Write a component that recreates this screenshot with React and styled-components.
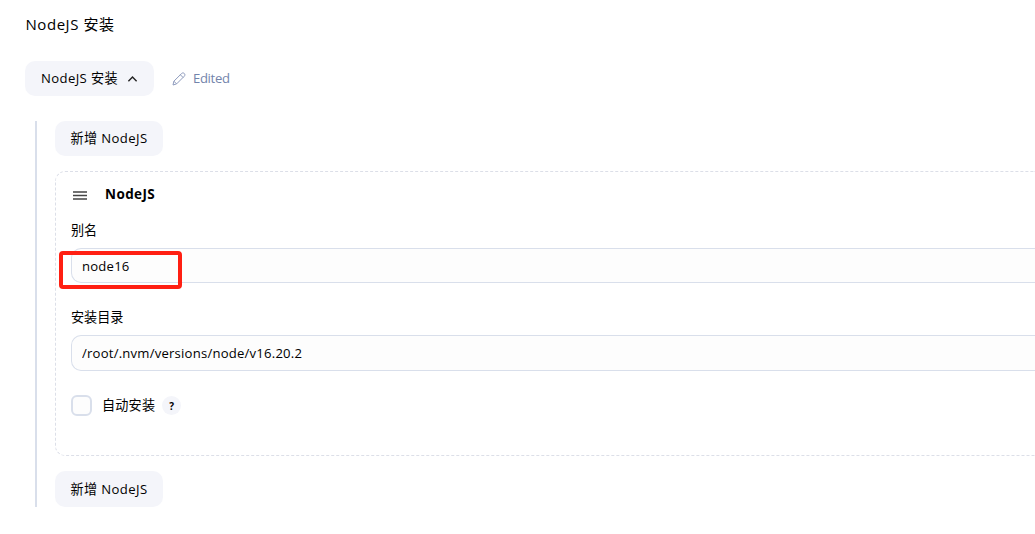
import React from "react";
import styled, { createGlobalStyle } from "styled-components";

const GlobalStyle = createGlobalStyle`
  * {
    box-sizing: border-box;
  }
  body {
    margin: 0;
    background: #fff;
    color: #000;
    font-family: "Open Sans", "Noto Sans CJK SC", sans-serif;
    font-size: 13.125px;
  }
`;

export default function App() {
  return (
    <>
      <GlobalStyle />
      <Page>
        <Title>NodeJS 安装</Title>
        <Toolbar>
          <Button type="button" $width={129}>
            <span>NodeJS 安装</span>
            <ChevronIcon />
          </Button>
          <Edited>
            <PencilIcon />
            <span>Edited</span>
          </Edited>
        </Toolbar>
        <Installations>
          <Button type="button">
            <span>新增 NodeJS</span>
          </Button>
          <Card>
            <CardHeader>
              <DragIcon />
              <span>NodeJS</span>
            </CardHeader>
            <Field>
              <Label>别名</Label>
              <Highlighted>
                <Input defaultValue="node16" />
                <Highlight />
              </Highlighted>
            </Field>
            <Field>
              <Label>安装目录</Label>
              <Input $height={36} defaultValue="/root/.nvm/versions/node/v16.20.2" />
            </Field>
            <CheckRow>
              <Checkbox />
              <CheckLabel>自动安装</CheckLabel>
              <Help>?</Help>
            </CheckRow>
          </Card>
          <Button type="button" $height={36}>
            <span>新增 NodeJS</span>
          </Button>
        </Installations>
      </Page>
    </>
  );
}

const ChevronIcon = () => (
  <svg width="11" height="8" viewBox="0 0 11 8" fill="none">
    <path d="M1.4 6.2L5.5 2.1l4.1 4.1" stroke="#222" strokeWidth="1.4" />
  </svg>
);

const PencilIcon = () => (
  <svg width="14" height="14" viewBox="0 0 14 14" fill="none" stroke="#8e9bbd" strokeWidth="1" strokeLinejoin="round">
    <path d="M1 13l.9-3.8 7.6-7.6c.9-.9 2-.9 2.8-.1s.8 1.9-.1 2.8l-7.6 7.6z" />
    <path d="M8.4 2.8l2.8 2.8M1.9 9.2l2.7 2.7" />
  </svg>
);

const DragIcon = () => (
  <svg width="14" height="9" viewBox="0 0 14 9" fill="none">
    <path d="M0 1h14M0 4.5h14M0 8h14" stroke="#444" strokeWidth="1.4" />
  </svg>
);

const Page = styled.main`
  height: 534px;
  padding: 14px 0 0 25px;
`;

const Title = styled.div`
  height: 20px;
  line-height: 20px;
  padding-left: 0.5px;
  font-size: 15px;
  letter-spacing: 0.55px;
`;

const Toolbar = styled.div`
  display: flex;
  align-items: center;
  gap: 18px;
  margin-top: 27px;
`;

const Button = styled.button`
  display: flex;
  align-items: center;
  justify-content: center;
  gap: 9px;
  width: ${({ $width = 108 }) => $width}px;
  height: ${({ $height = 35 }) => $height}px;
  padding: 0;
  border: 0;
  border-radius: 10px;
  background: #f4f5fa;
  color: #000;
  font: inherit;
  letter-spacing: 0.4px;
  white-space: nowrap;

  span {
    padding-bottom: 2px;
  }
`;

const Edited = styled.div`
  display: flex;
  align-items: center;
  gap: 7px;
  color: #7384ab;
  letter-spacing: -0.35px;

  span {
    padding-bottom: 2px;
  }
`;

const Installations = styled.div`
  display: flex;
  flex-direction: column;
  gap: 15px;
  height: 386px;
  margin: 25px 0 0 10px;
  padding-left: 18px;
  border-left: 2px solid #d9dfeb;
`;

// the card and its inputs stay open on the right, where the panel is cut off
const Card = styled.section`
  height: 285px;
  padding: 12px 0 0 15px;
  border: 1px dashed #dcdfe8;
  border-right: 0;
  border-radius: 10px 0 0 10px;
`;

const CardHeader = styled.div`
  display: flex;
  align-items: center;
  gap: 18px;
  height: 20px;
  padding-left: 2px;
  font-size: 13.5px;
  font-weight: 700;
  letter-spacing: 0.4px;

  svg {
    margin-top: 2px;
  }
`;

const Field = styled.div`
  margin-bottom: 24px;

  ${CardHeader} + & {
    margin-top: 16px;
  }
`;

const Label = styled.div`
  height: 20px;
  margin-bottom: 8px;
  line-height: 20px;
`;

const Input = styled.input`
  display: block;
  width: 100%;
  height: ${({ $height = 35 }) => $height}px;
  padding: 0 10px;
  border: 1px solid #d9dfeb;
  border-right: 0;
  border-radius: 10px 0 0 10px;
  background: #fdfdfd;
  color: #000;
  font: inherit;
  letter-spacing: 0.21px;
  outline: 0;
`;

const Highlighted = styled.div`
  position: relative;
`;

// red marker drawn over the alias field
const Highlight = styled.div`
  position: absolute;
  top: 3px;
  left: -12px;
  width: 123px;
  height: 38px;
  border: 4px solid #ff1f12;
  border-radius: 4px;
  pointer-events: none;
`;

const CheckRow = styled.div`
  display: flex;
  align-items: center;
  height: 21px;
`;

const Checkbox = styled.div`
  width: 21px;
  height: 21px;
  margin-right: 10px;
  border: 2px solid #d9dfeb;
  border-radius: 6px;
  background: #fdfdfd;
`;

const CheckLabel = styled.span`
  padding-bottom: 2px;
  letter-spacing: 0.2px;
`;

const Help = styled.div`
  display: flex;
  align-items: center;
  justify-content: center;
  width: 19px;
  height: 19px;
  margin-left: 7px;
  border-radius: 50%;
  background: #f4f5fa;
  font-size: 10px;
  font-weight: 700;
`;
